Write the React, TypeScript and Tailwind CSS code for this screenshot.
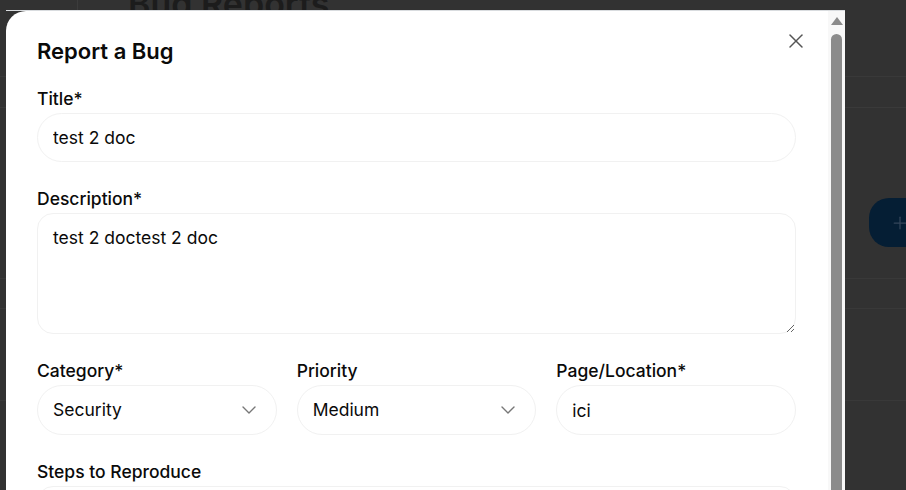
import { X, ChevronDown, Plus } from 'lucide-react';

const font = { fontFamily: 'Inter, "Noto Sans", sans-serif' };

function Field({ label, children }: { label: string; children: React.ReactNode }) {
  return (
    <div className="flex flex-col">
      <label className="text-[17.5px] leading-6 font-medium text-[#0a0a0a] mb-[2px]">{label}</label>
      {children}
    </div>
  );
}

function SelectBox({ value }: { value: string }) {
  return (
    <div className="h-[50px] rounded-full border border-[#f1f1f1] bg-white pl-[15px] pr-[15px] flex items-center justify-between text-[17.5px] text-[#0a0a0a]">
      <span>{value}</span>
      <ChevronDown size={24} strokeWidth={1.4} className="text-[#777]" />
    </div>
  );
}

export default function App() {
  return (
    <div className="relative w-[906px] h-[490px] overflow-hidden bg-[#323232]" style={font}>
      {/* page behind the overlay */}
      <div className="absolute left-[77px] top-0 h-[10px] w-px bg-[#3c3c3c]" />
      <div className="absolute left-[128px] top-[-22px] text-[34px] font-semibold text-[#1c1c1c]">Bug Reports</div>
      <div className="absolute left-0 right-0 top-[76px] h-px bg-[#393939]" />
      <div className="absolute left-0 right-0 top-[107px] h-px bg-[#3a3a3a]" />
      <div className="absolute left-0 right-0 top-[278px] h-px bg-[#393939]" />
      <div className="absolute left-0 right-0 top-[308px] h-px bg-[#393939]" />
      <div className="absolute left-0 right-0 top-[400px] h-px bg-[#393939]" />
      <div className="absolute left-[869px] top-[198px] w-[80px] h-[49px] rounded-[20px] bg-[#051e34] flex items-center pl-[21px]">
        <Plus size={20} strokeWidth={1.5} className="text-[#34465a]" />
      </div>

      {/* modal */}
      <div className="absolute left-[6px] top-[10px] w-[839px] h-[500px] flex border-t border-[#d9dcdf]">
        <div className="relative flex-1 bg-white rounded-tl-[20px] pl-[31px] pr-[32px] pt-[26px]">
          <button className="absolute right-[20px] top-[18px] text-[#555]">
            <X size={24} strokeWidth={1.5} />
          </button>
          <h2 className="text-[22px] leading-7 font-semibold text-[#0a0a0a]">Report a Bug</h2>
          <div className="mt-[22px] flex flex-col gap-[25px]">
            <Field label="Title*">
              <input
                readOnly
                defaultValue="test 2 doc"
                className="h-[49px] rounded-full border border-[#f1f1f1] bg-white px-[15px] text-[17.5px] text-[#0a0a0a] outline-none"
              />
            </Field>
            <Field label="Description*">
              <textarea
                readOnly
                defaultValue="test 2 doctest 2 doc"
                className="h-[121px] rounded-[16px] border border-[#f1f1f1] bg-white px-[15px] pt-[11px] text-[17.5px] text-[#0a0a0a] outline-none"
              />
            </Field>
            <div className="grid grid-cols-3 gap-5">
              <Field label="Category*">
                <SelectBox value="Security" />
              </Field>
              <Field label="Priority">
                <SelectBox value="Medium" />
              </Field>
              <Field label="Page/Location*">
                <input
                  readOnly
                  defaultValue="ici"
                  className="h-[50px] rounded-full border border-[#f1f1f1] bg-white px-[15px] text-[17.5px] text-[#0a0a0a] outline-none"
                />
              </Field>
            </div>
            <Field label="Steps to Reproduce">
              <textarea
                readOnly
                className="h-[100px] rounded-[16px] border border-[#f1f1f1] bg-white px-[15px] py-3 text-[17.5px] outline-none"
              />
            </Field>
          </div>
        </div>
        {/* scrollbar */}
        <div className="w-[17px] bg-[#f8f8f8] flex flex-col items-center pt-[6px]">
          <div className="w-0 h-0 border-l-[6px] border-r-[6px] border-b-[8px] border-l-transparent border-r-transparent border-b-[#8b8b8b]" />
          <div className="mt-[9px] w-[11px] flex-1 rounded-t-full bg-[#8b8b8b]" />
        </div>
      </div>
    </div>
  );
}
